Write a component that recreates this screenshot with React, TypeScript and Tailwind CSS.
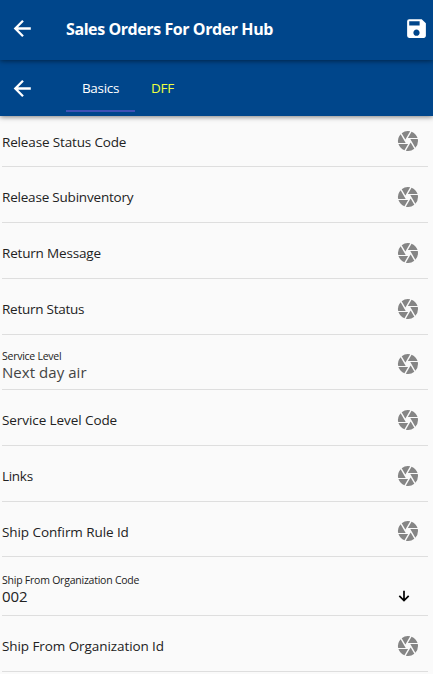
import { MdCamera, MdSave } from "react-icons/md";

type Field = {
  label: string;
  value?: string;
  height: string;
  pad: string;
  tracking: string;
  valueClass?: string;
  picker?: boolean;
};

const fields: Field[] = [
  { label: "Release Status Code", height: "h-[51px]", pad: "pb-[15px]", tracking: "tracking-[-0.15px]" },
  { label: "Release Subinventory", height: "h-[56px]", pad: "pb-[16px]", tracking: "tracking-[-0.2px]" },
  { label: "Return Message", height: "h-[56px]", pad: "pb-[16px]", tracking: "tracking-[-0.18px]" },
  { label: "Return Status", height: "h-[56px]", pad: "pb-[16px]", tracking: "tracking-[-0.25px]" },
  { label: "Service Level", value: "Next day air", height: "h-[55px]", pad: "pb-[8px]", tracking: "tracking-[-0.25px]", valueClass: "text-[#444] tracking-[0.05px]" },
  { label: "Service Level Code", height: "h-[56px]", pad: "pb-[16px]", tracking: "tracking-[-0.08px]" },
  { label: "Links", height: "h-[56px]", pad: "pb-[16px]", tracking: "tracking-[-0.3px]" },
  { label: "Ship Confirm Rule Id", height: "h-[55px]", pad: "pb-[15px]", tracking: "tracking-[-0.08px]" },
  { label: "Ship From Organization Code", value: "002", height: "h-[59px]", pad: "pb-[10px]", tracking: "tracking-[-0.23px]", valueClass: "text-[#222] tracking-[-0.05px]", picker: true },
  { label: "Ship From Organization Id", height: "h-[56px]", pad: "pb-[16px]", tracking: "tracking-[-0.08px]" },
];

function BackArrow() {
  return (
    <svg viewBox="0 0 25 25" className="size-[25px] shrink-0" fill="none" stroke="currentColor" strokeWidth="2.3">
      <path d="M20.8 12.5H5.5M13 4.8 5.3 12.5 13 20.2" />
    </svg>
  );
}

function DownArrow() {
  return (
    <svg viewBox="0 0 16 16" className="mb-[11px] mr-[16px] size-[16px] text-black" fill="none" stroke="currentColor" strokeWidth="1.7">
      <path d="M8 2.8V12.4M3.3 7.8 8 12.5l4.7-4.7" />
    </svg>
  );
}

function FieldRow({ field }: { field: Field }) {
  return (
    <div className={`ml-[2px] mr-[5px] flex items-end justify-between border-b border-[#dedede] ${field.height}`}>
      <div className={`whitespace-nowrap ${field.pad}`}>
        {field.value ? (
          <>
            <div className={`text-[10.5px] leading-[14px] text-[#222] ${field.tracking}`}>{field.label}</div>
            <div className={`text-[15px] leading-[18px] ${field.valueClass}`}>{field.value}</div>
          </>
        ) : (
          <div className={`text-[13.5px] leading-[18px] text-[#222] ${field.tracking}`}>{field.label}</div>
        )}
      </div>
      {field.picker ? (
        <DownArrow />
      ) : (
        <MdCamera className="mb-[13px] mr-[8px] size-[24px] text-[#858585]" />
      )}
    </div>
  );
}

export default function App() {
  return (
    <div className="flex h-[674px] w-full flex-col overflow-hidden bg-[#fafafa] font-['Open_Sans','Noto_Sans',sans-serif]">
      <header className="relative z-20 flex h-[60px] shrink-0 items-center bg-[#00468b] pb-[4px] pl-[10px] pr-[4px] text-white shadow-[0_1px_5px_rgba(0,0,0,0.5)]">
        <BackArrow />
        <h1 className="ml-[31px] mt-[2px] flex-1 whitespace-nowrap text-[16px] font-bold leading-[20px] tracking-[-0.42px]">
          Sales Orders For Order Hub
        </h1>
        <MdSave className="size-[25px]" />
      </header>
      <nav className="relative z-10 flex h-[56px] shrink-0 items-center bg-[#00468b] pl-[10px] text-[13.5px] text-white shadow-[0_1px_5px_rgba(0,0,0,0.5)]">
        <BackArrow />
        <div className="mb-[1px] ml-[31px] flex h-[48px] w-[69px] items-center justify-center border-b-2 border-[#3f51b5] pt-[4px] tracking-[-0.3px]">Basics</div>
        <div className="ml-[16px] tracking-[-0.2px] text-[#eeff41]">DFF</div>
      </nav>
      <main>
        {fields.map((field) => (
          <FieldRow key={field.label} field={field} />
        ))}
      </main>
    </div>
  );
}
